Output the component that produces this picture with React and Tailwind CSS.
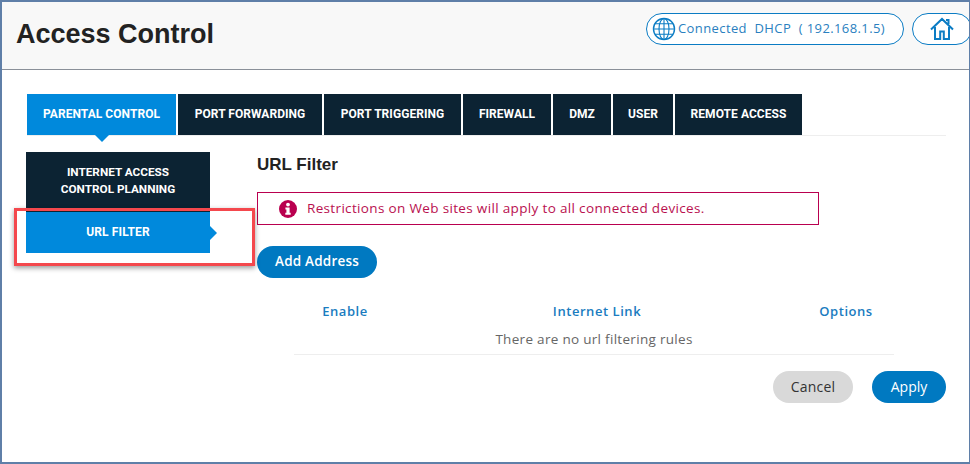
import React from 'react';

const tabs = [
  { label: 'PARENTAL CONTROL', width: 'w-[149px]', active: true },
  { label: 'PORT FORWARDING', width: 'w-[144px]' },
  { label: 'PORT TRIGGERING', width: 'w-[137px]' },
  { label: 'FIREWALL', width: 'w-[88px]' },
  { label: 'DMZ', width: 'w-[58px]' },
  { label: 'USER', width: 'w-[60px]' },
  { label: 'REMOTE ACCESS', width: 'w-[127px]' },
];

const GlobeIcon = () => (
  <svg width="24" height="24" viewBox="0 0 24 24" fill="none" stroke="#0b7cc4" strokeWidth="1.1">
    <circle cx="12" cy="12" r="10.5" strokeWidth="1.4" />
    <ellipse cx="12" cy="12" rx="5" ry="10.5" />
    <path d="M12 1.5v21M1.5 12h21M3 6.8h18M3 17.2h18" />
  </svg>
);

const HomeIcon = () => (
  <svg width="24" height="24" viewBox="0 0 24 24" fill="none" stroke="#0b7cc4" strokeWidth="2" strokeLinejoin="miter">
    <path d="M1 12.5 12 2l11 10.5M18.5 7V3H16M5 10v12h5.2v-7.5h3.6V22H19V10" />
  </svg>
);

const App = () => {
  return (
    <div className="relative w-[970px] h-[464px] overflow-hidden bg-white border-l-2 border-t-2 border-b-2 border-r border-[#5f7fa8] font-['Open_Sans',sans-serif]">
      {/* Header */}
      <header className="h-[68px] flex items-start justify-between bg-[#f8f8f8] border-b border-[#8a9099] pl-[14px] pr-0">
        <h1 className="mt-[16px] text-[27px] leading-[32px] font-bold text-[#222] font-['Liberation_Sans',sans-serif]">Access Control</h1>
        <div className="flex gap-2 mt-[11px] -mr-[3px]">
          <div className="flex items-center w-[258px] h-[32px] pl-[5px] gap-[2px] rounded-full border border-[#0b7cc4] bg-white text-[13px] tracking-[0.4px] text-[#2a7fc0] whitespace-pre">
            <GlobeIcon />
            <span className="-mt-[1px]">Connected  DHCP  ( 192.168.1.5)</span>
          </div>
          <div className="flex items-center justify-center w-[60px] h-[32px] rounded-full border border-[#0b7cc4] bg-white">
            <HomeIcon />
          </div>
        </div>
      </header>

      {/* Tabs */}
      <nav className="flex gap-[2px] ml-[25px] mr-[23px] mt-[24px] h-[42px] border-b border-[#eeeeee]">
        {tabs.map((tab) => (
          <div
            key={tab.label}
            className={`relative flex items-center justify-center h-[41px] shrink-0 ${tab.width} pb-[1px] text-[12px] font-bold tracking-[0.05px] text-white font-['Roboto',sans-serif] ${tab.active ? 'bg-[#0089dc]' : 'bg-[#0c2333]'}`}
          >
            {tab.label}
            {tab.active && (
              <span className="absolute left-1/2 top-full -ml-[7px] w-0 h-0 border-x-[7px] border-x-transparent border-t-[7px] border-t-[#0089dc]" />
            )}
          </div>
        ))}
      </nav>

      <div className="flex mt-[16px] ml-[24px]">
        {/* Side menu */}
        <aside className="w-[184px] shrink-0 font-['Roboto',sans-serif] font-bold text-white text-center">
          <div className="flex items-center justify-center h-[60px] pb-[2px] text-[11.75px] leading-[17px] bg-[#0c2333]">
            <span>INTERNET ACCESS<br />CONTROL PLANNING</span>
          </div>
          <div className="relative flex items-center justify-center h-[41px] pb-[1px] text-[12px] tracking-[0.15px] bg-[#0089dc]">
            URL FILTER
            <span className="absolute left-full top-1/2 -mt-[7px] w-0 h-0 border-y-[7px] border-y-transparent border-l-[7px] border-l-[#0089dc]" />
          </div>
        </aside>

        {/* Content */}
        <main className="ml-[47px] w-[689px]">
          <h2 className="mt-[1px] text-[17px] leading-[24px] font-bold text-[#222] font-['Liberation_Sans',sans-serif]">URL Filter</h2>
          <div className="flex items-center w-[562px] h-[33px] mt-[15px] pl-[21px] gap-[10px] border border-[#b9004f] text-[13.5px] tracking-[0.34px] text-[#b9104f]">
            <svg width="18" height="18" viewBox="0 0 18 18">
              <circle cx="9" cy="9" r="9" fill="#b9004f" />
              <circle cx="9" cy="4.6" r="1.9" fill="#fff" />
              <path d="M6.4 7.6h4.2v5.2h1.1v1.9H6.3v-1.9h1.1V9.5h-1z" fill="#fff" />
            </svg>
            <span>Restrictions on Web sites will apply to all connected devices.</span>
          </div>
          <button className="block w-[120px] h-[32px] mt-[21px] pb-[2px] rounded-full bg-[#0079c1] text-[13.5px] font-semibold tracking-[0.2px] text-white">Add Address</button>

          {/* Rules table */}
          <div className="ml-[37px] w-[600px] mt-[22px] border-b border-[#eeeeee]">
            <div className="grid grid-cols-3 h-[24px] items-center text-[13px] font-semibold tracking-[0.55px] text-[#1a7cc0] text-center">
              <span className="-ml-[98px]">Enable</span>
              <span className="ml-[6px]">Internet Link</span>
              <span className="ml-[104px]">Options</span>
            </div>
            <div className="h-[30px] pt-[4px] text-center text-[13.5px] tracking-[0.3px] leading-[22px] text-[#666]">There are no url filtering rules</div>
          </div>

          <div className="flex justify-end gap-[19px] w-[689px] mt-[16px]">
            <button className="w-[80px] h-[32px] pb-[2px] rounded-full bg-[#d9d9d9] text-[14px] tracking-[0.2px] text-[#333]">Cancel</button>
            <button className="w-[74px] h-[32px] pb-[2px] rounded-full bg-[#0079c1] text-[14px] font-medium text-white">Apply</button>
          </div>
        </main>
      </div>

      {/* Annotation highlight */}
      <div className="absolute left-[12px] top-[206px] w-[241px] h-[58px] border-[3px] border-[#f4484d] shadow-[0_2px_5px_rgba(0,0,0,0.4)]" />
    </div>
  );
};

export default App;
